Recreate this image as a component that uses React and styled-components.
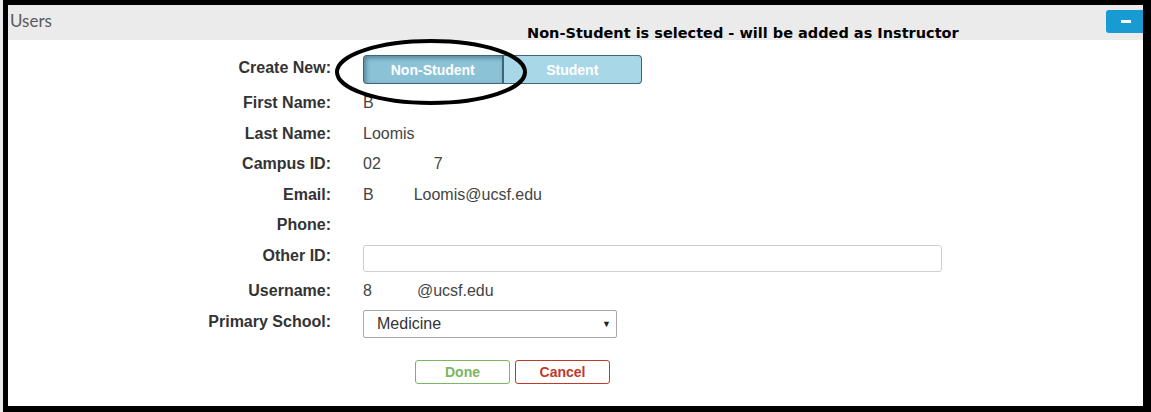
import React from "react";
import styled, { createGlobalStyle } from "styled-components";

const GlobalStyle = createGlobalStyle`
  html, body {
    margin: 0;
    padding: 0;
    background: #fff;
  }
  * {
    box-sizing: border-box;
  }
`;

const rows = [
  { label: "First Name:", value: [["B", 0]] },
  { label: "Last Name:", value: [["Loomis", 0]] },
  { label: "Campus ID:", value: [["02", 0], ["7", 53]] },
  { label: "Email:", value: [["B", 0], ["Loomis@ucsf.edu", 40]] },
  { label: "Phone:", value: [] },
];

export default function App() {
  return (
    <Page>
      <GlobalStyle />
      <Frame>
        <Header>
          <Title>Users</Title>
          <CollapseButton aria-label="collapse">
            <span />
          </CollapseButton>
        </Header>

        <Form>
          <Row $h={29}>
            <Label $up>Create New:</Label>
            <Toggle>
              <ToggleButton $active>Non-Student</ToggleButton>
              <ToggleButton>Student</ToggleButton>
            </Toggle>
          </Row>

          <TextRows>
            {rows.map((row) => (
              <Row key={row.label} $h={30.5}>
                <Label>{row.label}</Label>
                <Value>
                  {row.value.map(([text, gap], i) => (
                    <Piece key={i} $gap={gap}>
                      {text}
                    </Piece>
                  ))}
                </Value>
              </Row>
            ))}
          </TextRows>

          <Row $h={27} $mt={4}>
            <Label $up>Other ID:</Label>
            <TextInput type="text" />
          </Row>

          <Row $h={30} $mt={4}>
            <Label>Username:</Label>
            <Value>
              <Piece>8</Piece>
              <Piece $gap={45}>@ucsf.edu</Piece>
            </Value>
          </Row>

          <Row $h={28} $mt={4}>
            <Label $up>Primary School:</Label>
            <Select>
              <span>Medicine</span>
              <Arrow>▼</Arrow>
            </Select>
          </Row>

          <Actions>
            <ActionButton $color="#7bb661">Done</ActionButton>
            <ActionButton $color="#c0392b">Cancel</ActionButton>
          </Actions>
        </Form>

        <Note>Non-Student is selected - will be added as Instructor</Note>
        <Circle viewBox="0 0 200 72" width="200" height="72">
          <ellipse cx="100" cy="36" rx="94" ry="31" fill="none" stroke="#000" strokeWidth="4" />
        </Circle>
      </Frame>
    </Page>
  );
}

const Page = styled.div`
  width: 1151px;
  height: 412px;
  padding-left: 3px;
  background: #eaeaea;
  overflow: hidden;
`;

const Frame = styled.div`
  position: relative;
  width: 1148px;
  height: 412px;
  background: #fff;
  border-style: solid;
  border-color: #000;
  border-width: 5px 8px 6px 5px;
  font-family: "Liberation Sans", Arial, sans-serif;
  color: #333;
`;

const Header = styled.div`
  height: 35px;
  background: #ebebeb;
  display: flex;
  align-items: flex-start;
  justify-content: space-between;
`;

const Title = styled.div`
  font-family: Lato, "Liberation Sans", sans-serif;
  font-size: 17px;
  color: #5a5a5a;
  padding: 5px 0 0 2px;
`;

const CollapseButton = styled.button`
  margin-top: 5px;
  width: 37px;
  height: 23px;
  border: none;
  border-radius: 3px 0 0 3px;
  background: #179bd2;
  display: flex;
  align-items: center;
  justify-content: center;
  padding: 0 0 0 2px;

  span {
    display: block;
    width: 10px;
    height: 3px;
    background: #fff;
  }
`;

const Form = styled.div`
  padding-top: 15px;
  display: flex;
  flex-direction: column;
`;

const TextRows = styled.div`
  margin-top: 4px;
  display: flex;
  flex-direction: column;
`;

const Row = styled.div`
  display: grid;
  grid-template-columns: 323px auto;
  column-gap: 32px;
  align-items: center;
  height: ${(p) => p.$h}px;
  margin-top: ${(p) => p.$mt || 0}px;
`;

const Label = styled.div`
  text-align: right;
  font-weight: bold;
  font-size: 16px;
  color: #333;
  position: relative;
  top: ${(p) => (p.$up ? -2 : 0)}px;
`;

const Value = styled.div`
  display: flex;
  font-size: 16px;
  color: #444;
`;

const Piece = styled.span`
  margin-left: ${(p) => p.$gap || 0}px;
`;

const Toggle = styled.div`
  display: flex;
  width: 279px;
  height: 29px;
`;

const ToggleButton = styled.button`
  flex: 1;
  height: 100%;
  margin: 0;
  font-family: "Liberation Sans", Arial, sans-serif;
  font-weight: bold;
  font-size: 14px;
  color: #fff;
  border: 1px solid #3d6677;
  background: ${(p) => (p.$active ? "#8cc2d6" : "#a8d8e7")};
  box-shadow: ${(p) =>
    p.$active ? "inset 2px 2px 4px rgba(30, 70, 90, 0.5)" : "none"};
  border-radius: ${(p) => (p.$active ? "4px 0 0 4px" : "0 4px 4px 0")};
  border-left-width: ${(p) => (p.$active ? 1 : 0)}px;
  border-right-width: ${(p) => (p.$active ? 2 : 1)}px;
`;

const TextInput = styled.input`
  width: 579px;
  height: 27px;
  border: 1px solid #cfcfcf;
  border-radius: 3px;
  outline: none;
`;

const Select = styled.div`
  width: 254px;
  height: 28px;
  border: 1px solid #a9a9a9;
  border-radius: 2px;
  display: flex;
  align-items: center;
  justify-content: space-between;
  padding: 0 5px 0 13px;
  font-size: 16px;
  color: #333;
`;

const Arrow = styled.span`
  font-size: 9px;
  color: #222;
`;

const Actions = styled.div`
  margin: 22px 0 0 407px;
  display: flex;
  gap: 5px;
`;

const ActionButton = styled.button`
  width: 95px;
  height: 24px;
  background: #fff;
  border: 1px solid ${(p) => p.$color};
  border-radius: 3px;
  color: ${(p) => p.$color};
  font-family: "Liberation Sans", Arial, sans-serif;
  font-weight: bold;
  font-size: 14px;
`;

const Note = styled.div`
  position: absolute;
  left: 519px;
  top: 20px;
  font-family: "DejaVu Sans", Verdana, sans-serif;
  font-weight: bold;
  font-size: 14.5px;
  color: #000;
  white-space: nowrap;
`;

const Circle = styled.svg`
  position: absolute;
  left: 323px;
  top: 31px;
`;
